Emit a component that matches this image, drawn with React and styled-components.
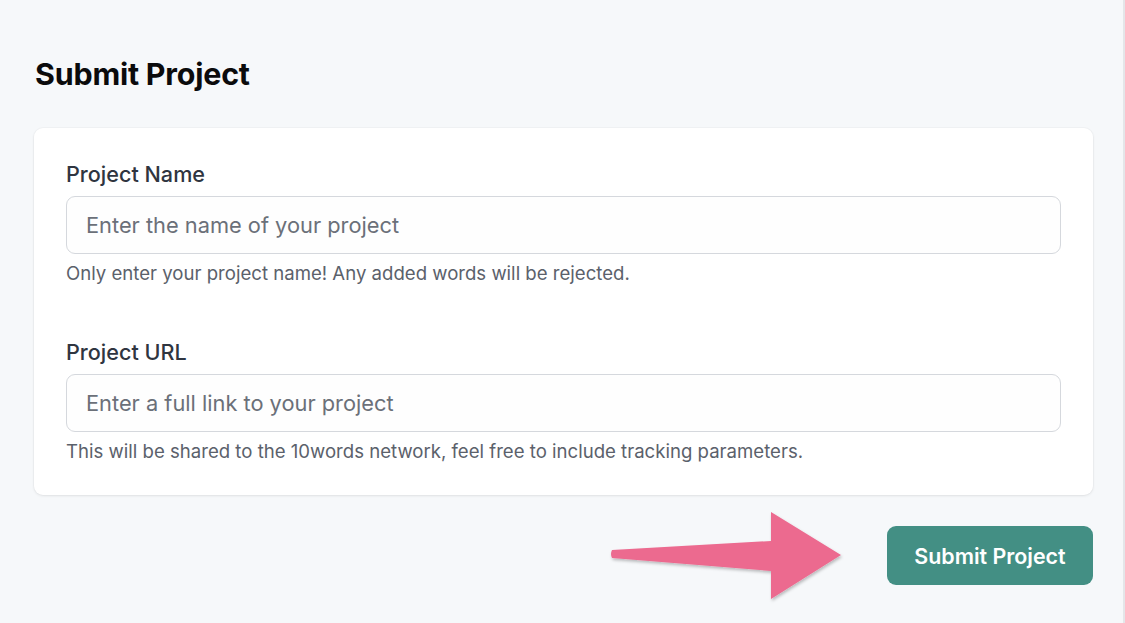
import React from "react";
import styled, { createGlobalStyle } from "styled-components";

const Global = createGlobalStyle`
  html, body { margin: 0; padding: 0; }
  body {
    background: #f6f8fa;
    font-family: Inter, "Noto Sans", sans-serif;
    -webkit-font-smoothing: antialiased;
  }
  * { box-sizing: border-box; }
`;

const Page = styled.div`
  position: relative;
  width: 1125px;
  height: 623px;
  padding: 55px 30px 0 34px;
  background: #f6f8fa;
  overflow: hidden;
  border-right: 2px solid #e4e6e9;
`;

const Title = styled.h1`
  margin: 0 0 35px 1px;
  font-size: 30.4px;
  line-height: 38px;
  font-weight: 700;
  color: #0b0b0c;
  letter-spacing: -0.2px;
`;

const Card = styled.div`
  background: #ffffff;
  border-radius: 9px;
  box-shadow: 0 1px 3px rgba(0, 0, 0, 0.08), 0 0 0 1px rgba(0, 0, 0, 0.02);
  padding: 32px 32px 32px 32px;
  display: flex;
  flex-direction: column;
  gap: 53px;
`;

const Field = styled.div`
  display: flex;
  flex-direction: column;
`;

const Label = styled.label`
  font-size: 21.6px;
  line-height: 28px;
  font-weight: 500;
  color: #2f3540;
  margin-bottom: 8px;
`;

const Input = styled.input`
  height: 58px;
  width: 100%;
  border: 1.5px solid #d5d8dd;
  border-radius: 9px;
  padding: 0 19px;
  font-family: inherit;
  font-size: 21.8px;
  color: #111827;
  background: #fefefe;
  outline: none;
  &::placeholder { color: #6b7079; }
`;

const Help = styled.p`
  margin: 7px 0 0;
  font-size: 18.6px;
  line-height: 24px;
  color: #5b616b;
`;

const Footer = styled.div`
  display: flex;
  justify-content: flex-end;
  margin-top: 31px;
`;

const Button = styled.button`
  width: 206px;
  height: 59px;
  border: none;
  border-radius: 9px;
  background: #438f84;
  color: #ffffff;
  font-family: inherit;
  font-size: 21.4px;
  font-weight: 600;
  cursor: pointer;
`;

const Arrow = styled.svg`
  position: absolute;
  left: 600px;
  top: 500px;
  overflow: visible;
`;

export default function App() {
  return (
    <Page>
      <Global />
      <Title>Submit Project</Title>
      <Card>
        <Field>
          <Label>Project Name</Label>
          <Input placeholder="Enter the name of your project" />
          <Help>Only enter your project name! Any added words will be rejected.</Help>
        </Field>
        <Field>
          <Label>Project URL</Label>
          <Input placeholder="Enter a full link to your project" />
          <Help>This will be shared to the 10words network, feel free to include tracking parameters.</Help>
        </Field>
      </Card>
      <Footer>
        <Button>Submit Project</Button>
      </Footer>
      <Arrow width="260" height="110" viewBox="0 0 260 110">
        <defs>
          <filter id="sh" x="-10%" y="-20%" width="130%" height="150%">
            <feDropShadow dx="1" dy="2" stdDeviation="1.5" floodColor="#000" floodOpacity="0.25" />
          </filter>
        </defs>
        <path
          d="M12 50 L171 41 L171 12 L241 55 L171 99 L171 71 L12 58 Q10 54 12 50 Z"
          fill="#ec6a8f"
          filter="url(#sh)"
        />
      </Arrow>
    </Page>
  );
}
